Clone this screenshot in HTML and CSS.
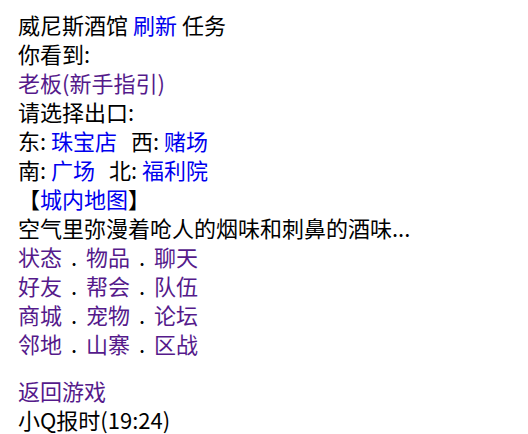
FILE: index.html
```html
<!DOCTYPE html>
<html lang="zh-CN">
<head>
<meta charset="utf-8">
<title>威尼斯酒馆</title>
<link rel="stylesheet" href="styles.css">
</head>
<body>
<div class="page">
  <div class="line">威尼斯酒馆 <a class="link" href="#">刷新</a> 任务</div>
  <div class="line">你看到:</div>
  <div class="line"><a class="link visited" href="#">老板(新手指引)</a></div>
  <div class="line">请选择出口:</div>
  <div class="line">东: <a class="link" href="#">珠宝店</a><span class="gap"></span>西: <a class="link" href="#">赌场</a></div>
  <div class="line">南: <a class="link" href="#">广场</a><span class="gap"></span>北: <a class="link" href="#">福利院</a></div>
  <div class="line"><span class="bracket">【</span><a class="link" href="#">城内地图</a><span class="bracket">】</span></div>
  <div class="line">空气里弥漫着呛人的烟味和刺鼻的酒味...</div>
  <div class="menu">
    <div class="line"><a class="link visited" href="#">状态</a><span class="dot">.</span><a class="link visited" href="#">物品</a><span class="dot">.</span><a class="link visited" href="#">聊天</a></div>
    <div class="line"><a class="link visited" href="#">好友</a><span class="dot">.</span><a class="link visited" href="#">帮会</a><span class="dot">.</span><a class="link visited" href="#">队伍</a></div>
    <div class="line"><a class="link visited" href="#">商城</a><span class="dot">.</span><a class="link visited" href="#">宠物</a><span class="dot">.</span><a class="link visited" href="#">论坛</a></div>
    <div class="line"><a class="link visited" href="#">邻地</a><span class="dot">.</span><a class="link visited" href="#">山寨</a><span class="dot">.</span><a class="link visited" href="#">区战</a></div>
  </div>
  <div class="footer">
    <div class="line"><a class="link visited" href="#">返回游戏</a></div>
    <div class="line">小Q报时(19:24)</div>
  </div>
</div>
</body>
</html>
```
FILE: styles.css
```css
html, body {
  margin: 0;
  padding: 0;
  background: #ffffff;
}
body {
  font-family: "Noto Sans CJK SC", "Noto Sans", sans-serif;
  font-size: 22px;
  color: #000000;
}
.page {
  padding: 10px 0 0 18px;
}
.line {
  line-height: 29px;
  height: 29px;
  white-space: nowrap;
}
.link {
  color: #0000ee;
  text-decoration: none;
}
.link.visited {
  color: #551a8b;
}
.gap {
  display: inline-block;
  width: 14px;
}
.bracket {
  color: #000000;
}
.dot {
  display: inline-block;
  width: 24px;
  text-align: center;
  color: #000000;
}
.footer {
  margin-top: 18px;
}
```
